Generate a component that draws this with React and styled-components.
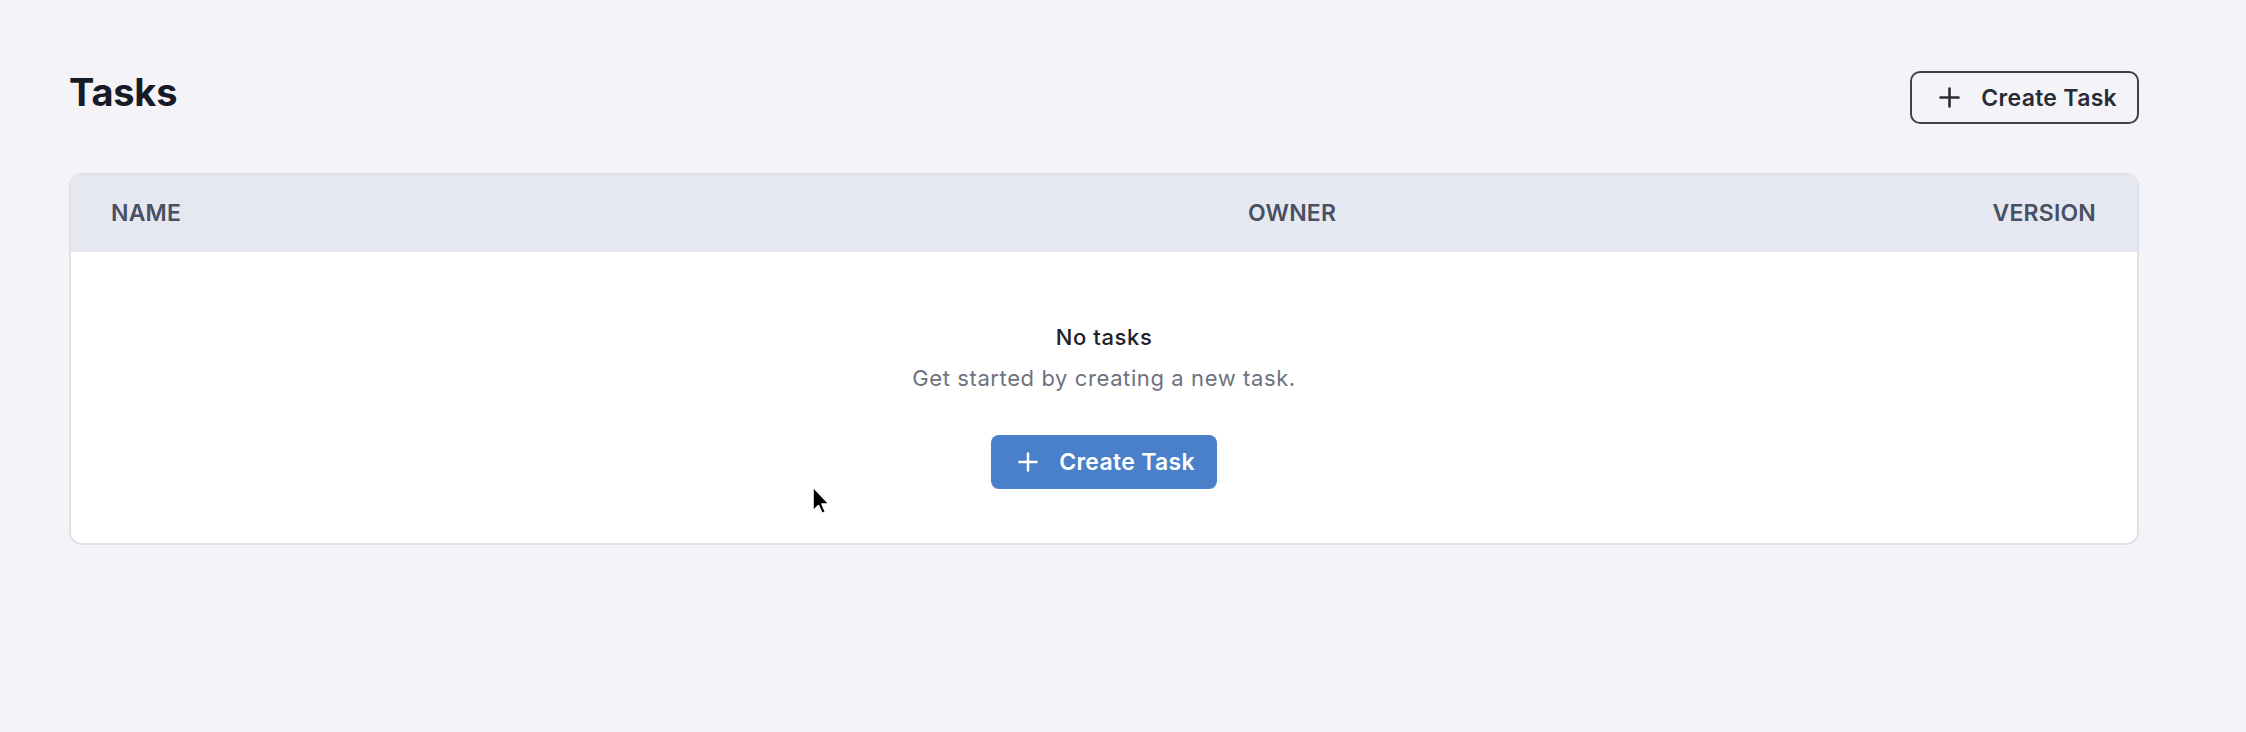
import React from "react";
import styled, { createGlobalStyle } from "styled-components";

const GlobalStyle = createGlobalStyle`
  html, body {
    margin: 0;
    padding: 0;
    background: #f3f3f8;
    font-family: Inter, "Noto Sans", "Liberation Sans", sans-serif;
    -webkit-font-smoothing: antialiased;
  }
`;

const Page = styled.div`
  position: relative;
  min-height: 732px;
  padding: 67px 107px 0 69px;
  box-sizing: border-box;
`;

const TopBar = styled.div`
  display: flex;
  justify-content: space-between;
  align-items: flex-start;
  margin-bottom: 49px;
`;

const Title = styled.h1`
  margin: 0;
  padding-top: 2px;
  font-size: 38px;
  line-height: 47px;
  font-weight: 700;
  color: #161b27;
  letter-spacing: -0.2px;
`;

const Button = styled.button`
  display: flex;
  align-items: center;
  gap: 21px;
  height: ${(p) => (p.$primary ? "54px" : "53px")};
  margin-top: ${(p) => (p.$primary ? "0" : "4px")};
  padding: ${(p) => (p.$primary ? "0 22px 0 27px" : "0 20px 0 27px")};
  border: ${(p) => (p.$primary ? "none" : "2px solid #3c414d")};
  border-radius: ${(p) => (p.$primary ? "8px" : "10px")};
  background: ${(p) => (p.$primary ? "#4a80c9" : "transparent")};
  color: ${(p) => (p.$primary ? "#ffffff" : "#272c37")};
  font-family: inherit;
  font-size: 23px;
  font-weight: 600;
  letter-spacing: 0.3px;
  cursor: pointer;
  box-sizing: border-box;
`;

const Card = styled.div`
  background: #ffffff;
  border: 2px solid #dfe1e7;
  border-radius: 13px;
  overflow: hidden;
`;

const HeadRow = styled.div`
  display: grid;
  grid-template-columns: 1137px 1fr auto;
  align-items: center;
  height: 76px;
  padding: 0 41px 0 40px;
  background: #e5e8f1;
  border-bottom: 1px solid #e3e5ea;
`;

const HeadCell = styled.div`
  font-size: 23px;
  font-weight: 600;
  color: #485062;
  letter-spacing: 0.2px;
  text-transform: uppercase;
`;

const Empty = styled.div`
  display: flex;
  flex-direction: column;
  align-items: center;
  padding: 70px 0 54px;
`;

const EmptyTitle = styled.div`
  font-size: 22px;
  line-height: 30px;
  font-weight: 500;
  letter-spacing: 0.6px;
  color: #1d222c;
`;

const EmptyText = styled.div`
  margin-top: 11px;
  margin-bottom: 42px;
  font-size: 22px;
  line-height: 30px;
  letter-spacing: 0.6px;
  color: #6d7280;
`;

const Cursor = styled.svg`
  position: absolute;
  left: 806px;
  top: 484px;
  width: 22px;
  height: 32px;
  pointer-events: none;
`;

const PlusIcon = ({ size = 21 }) => (
  <svg width={size} height={size} viewBox="0 0 21 21" fill="none">
    <path d="M10.5 1.5v18M1.5 10.5h18" stroke="currentColor" strokeWidth="2.6" strokeLinecap="round" />
  </svg>
);

export default function App() {
  return (
    <>
      <GlobalStyle />
      <Page>
        <TopBar>
          <Title>Tasks</Title>
          <Button>
            <PlusIcon />
            Create Task
          </Button>
        </TopBar>

        <Card>
          <HeadRow>
            <HeadCell>Name</HeadCell>
            <HeadCell>Owner</HeadCell>
            <HeadCell>Version</HeadCell>
          </HeadRow>
          <Empty>
            <EmptyTitle>No tasks</EmptyTitle>
            <EmptyText>Get started by creating a new task.</EmptyText>
            <Button $primary>
              <PlusIcon size={20} />
              Create Task
            </Button>
          </Empty>
        </Card>

        <Cursor viewBox="0 0 22 32">
          <path
            d="M7 3 L7 27 L12.5 21.5 L16 29.5 L19.5 28 L16 20 L23 20 Z"
            fill="#000"
            stroke="#fff"
            strokeWidth="1.6"
            strokeLinejoin="round"
          />
        </Cursor>
      </Page>
    </>
  );
}
